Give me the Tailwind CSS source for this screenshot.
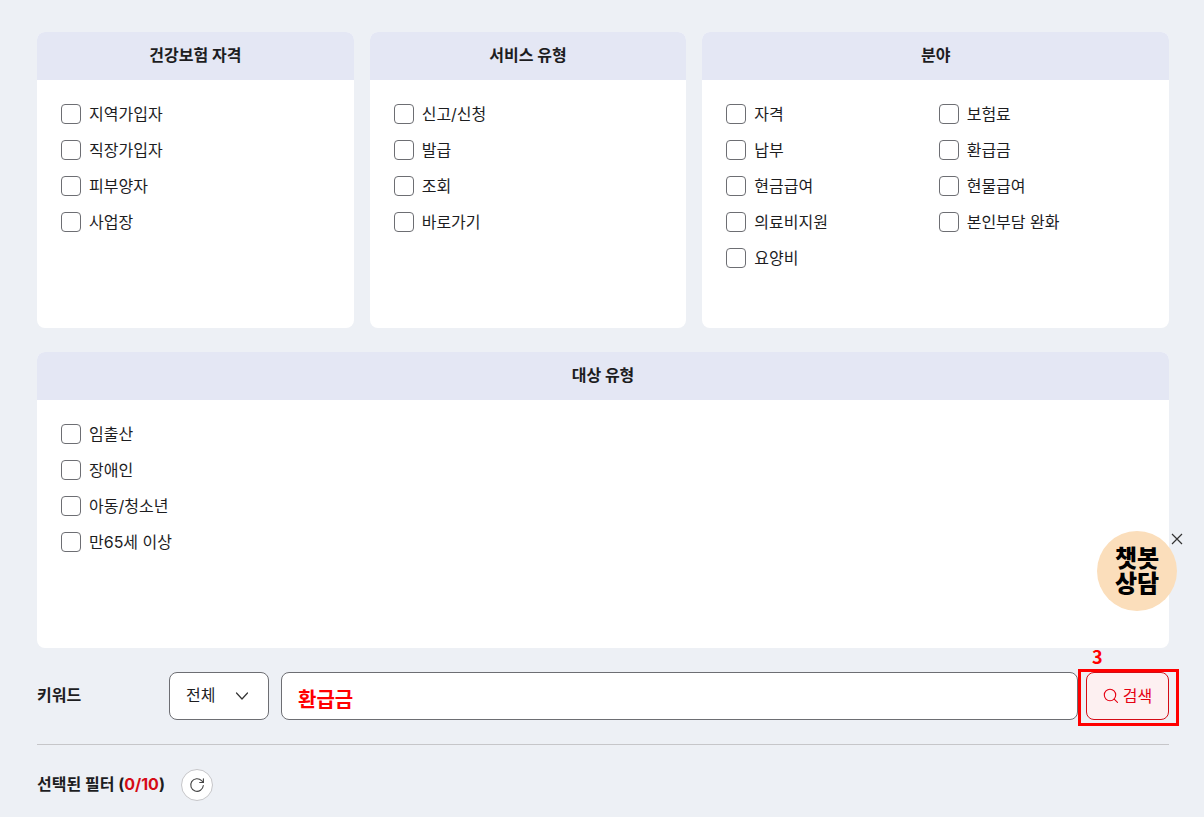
<!DOCTYPE html>
<html lang="ko">
<head>
    <meta charset="UTF-8">
    <meta name="viewport" content="width=device-width, initial-scale=1.0">
    <title>서비스 찾기</title>
    <!-- Tailwind CSS CDN -->
    <script src="https://cdn.jsdelivr.net/npm/@tailwindcss/browser@4"></script>
    <style>
        body {
            font-family: "Inter", "Noto Sans CJK KR", sans-serif;
        }
        /* Plain rounded tick boxes */
        input[type="checkbox"] {
            appearance: none;
            width: 20px;
            height: 20px;
            flex-shrink: 0;
            border: 1px solid #6d6e73;
            border-radius: 4px;
            background: #fff;
        }
        input[type="checkbox"]:checked {
            background: #d50b15;
            border-color: #d50b15;
        }
    </style>
</head>
<body class="relative min-h-screen bg-[#edf0f5] text-base text-[#1d1d1f]">

    <main class="pl-[37px] pr-[35px] pt-8 pb-4">
        <form onsubmit="return false">
            <!-- Filter cards -->
            <div class="grid grid-cols-[19fr_19fr_28fr] gap-4">
                <section class="bg-white rounded-lg overflow-hidden min-h-[296px]">
                    <h2 class="h-12 bg-[#e4e7f4] leading-[46px] font-bold text-center">건강보험 자격</h2>
                    <div class="p-6 grid gap-4">
                        <label class="flex items-center gap-2 leading-5"><input type="checkbox">지역가입자</label>
                        <label class="flex items-center gap-2 leading-5"><input type="checkbox">직장가입자</label>
                        <label class="flex items-center gap-2 leading-5"><input type="checkbox">피부양자</label>
                        <label class="flex items-center gap-2 leading-5"><input type="checkbox">사업장</label>
                    </div>
                </section>

                <section class="bg-white rounded-lg overflow-hidden">
                    <h2 class="h-12 bg-[#e4e7f4] leading-[46px] font-bold text-center">서비스 유형</h2>
                    <div class="p-6 grid gap-4">
                        <label class="flex items-center gap-2 leading-5"><input type="checkbox">신고/신청</label>
                        <label class="flex items-center gap-2 leading-5"><input type="checkbox">발급</label>
                        <label class="flex items-center gap-2 leading-5"><input type="checkbox">조회</label>
                        <label class="flex items-center gap-2 leading-5"><input type="checkbox">바로가기</label>
                    </div>
                </section>

                <section class="bg-white rounded-lg overflow-hidden">
                    <h2 class="h-12 bg-[#e4e7f4] leading-[46px] font-bold text-center">분야</h2>
                    <div class="p-6 grid grid-cols-2 gap-x-1.5 gap-y-4">
                        <label class="flex items-center gap-2 leading-5"><input type="checkbox">자격</label>
                        <label class="flex items-center gap-2 leading-5"><input type="checkbox">보험료</label>
                        <label class="flex items-center gap-2 leading-5"><input type="checkbox">납부</label>
                        <label class="flex items-center gap-2 leading-5"><input type="checkbox">환급금</label>
                        <label class="flex items-center gap-2 leading-5"><input type="checkbox">현금급여</label>
                        <label class="flex items-center gap-2 leading-5"><input type="checkbox">현물급여</label>
                        <label class="flex items-center gap-2 leading-5"><input type="checkbox">의료비지원</label>
                        <label class="flex items-center gap-2 leading-5"><input type="checkbox">본인부담 완화</label>
                        <label class="flex items-center gap-2 leading-5"><input type="checkbox">요양비</label>
                    </div>
                </section>
            </div>

            <section class="mt-6 bg-white rounded-lg overflow-hidden min-h-[296px]">
                <h2 class="h-12 bg-[#e4e7f4] leading-[46px] font-bold text-center">대상 유형</h2>
                <div class="p-6 grid gap-4">
                    <label class="flex items-center gap-2 leading-5"><input type="checkbox">임출산</label>
                    <label class="flex items-center gap-2 leading-5"><input type="checkbox">장애인</label>
                    <label class="flex items-center gap-2 leading-5"><input type="checkbox">아동/청소년</label>
                    <label class="flex items-center gap-2 leading-5"><input type="checkbox">만65세 이상</label>
                </div>
            </section>

            <!-- Keyword search -->
            <div class="mt-6 pb-6 flex border-b border-[#c6c6c9]">
                <label for="keyword" class="w-[132px] leading-[46px] font-bold">키워드</label>
                <div class="relative w-[100px] mr-3">
                    <select id="scope" aria-label="검색 범위" class="appearance-none w-full h-12 pl-4 pb-0.5 bg-white border border-[#6d6e73] rounded-lg">
                        <option>전체</option>
                    </select>
                    <svg class="absolute right-5 top-4 w-3.5 h-3.5 pointer-events-none" viewBox="0 0 14 14" fill="none" stroke="#333" stroke-width="1.2" stroke-linecap="round" stroke-linejoin="round">
                        <path d="M1.5 5L7 11L12.5 5"/>
                    </svg>
                </div>
                <input type="text" id="keyword" value="환급금" class="flex-1 min-w-0 h-12 px-4 pt-1 mr-2 bg-white border border-[#6d6e73] rounded-lg text-xl font-bold text-[#ff0000] font-['Noto_Sans_CJK_KR',sans-serif]">
                <div class="relative">
                    <button type="submit" class="flex items-center justify-center gap-1 w-[83px] h-12 bg-[#fdf0f1] border border-[#d50b15] rounded-lg text-[#e60012]">
                        <svg class="w-4 h-4" viewBox="0 0 16 16" fill="none" stroke="currentColor" stroke-width="1.1" stroke-linecap="round">
                            <circle cx="7" cy="7" r="5.7"/>
                            <path d="M11.2 11.2L14.5 14.3"/>
                        </svg>
                        검색
                    </button>
                    <!-- Step marker -->
                    <div class="absolute -top-[3px] -bottom-1.5 -left-2 -right-2.5 border-3 border-[#ff0000] pointer-events-none"></div>
                    <span class="absolute left-1.5 -top-7 text-lg leading-6 font-bold text-[#ff0000] font-['Noto_Sans_CJK_KR',sans-serif]">3</span>
                </div>
            </div>

            <!-- Selected filters -->
            <div class="mt-6 flex items-start gap-4">
                <p class="font-bold leading-[30px]">선택된 필터 (<span class="text-[#d50b15]">0/10</span>)</p>
                <button type="reset" aria-label="초기화" class="flex items-center justify-center w-8 h-8 bg-white border border-[#c6c6c9] rounded-full">
                    <svg class="w-4 h-4" viewBox="0 0 16 16" fill="none" stroke="#444" stroke-width="1.1" stroke-linecap="round" stroke-linejoin="round">
                        <path d="M14.3 8.5A6.3 6.3 0 1 1 12.6 3.7L14.3 5.4"/>
                        <path d="M14.4 1.8V5.5H10.7"/>
                    </svg>
                </button>
            </div>
        </form>
    </main>

    <!-- Chatbot shortcut -->
    <div class="fixed right-[27px] bottom-[206px]">
        <a href="#" class="flex items-center justify-center w-20 h-20 rounded-full bg-[#fbdebb] text-black text-2xl leading-[25px] font-black">
            <span>챗봇<br>상담</span>
        </a>
        <button type="button" aria-label="닫기" class="absolute -right-1.5 top-0.5 w-3 h-3">
            <svg class="w-3 h-3" viewBox="0 0 12 12" fill="none" stroke="#333" stroke-width="1.2">
                <path d="M1 1L11 11M11 1L1 11"/>
            </svg>
        </button>
    </div>

</body>
</html>
